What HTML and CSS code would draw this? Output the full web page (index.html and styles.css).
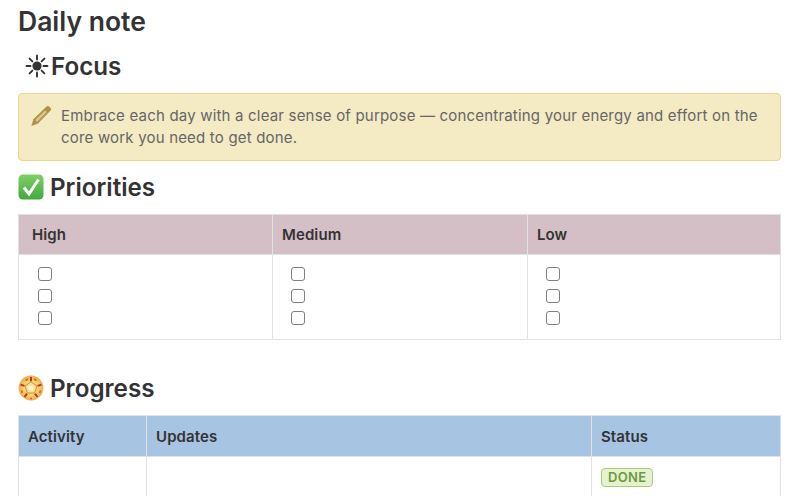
FILE: index.html
```html
<!DOCTYPE html>
<html lang="en">
<head>
    <meta charset="UTF-8">
    <title>Daily note</title>
    <link rel="stylesheet" href="styles.css">
</head>
<body>
<div class="page">
    <h1 class="title">Daily note</h1>

    <h2 class="heading heading-focus">
        <svg class="icon-sun" viewBox="0 0 24 24" width="24" height="24">
            <circle cx="12" cy="12" r="4.6" fill="#333"/>
            <g stroke="#333" stroke-width="1.9" stroke-linecap="round">
                <path d="M12 1.5v4M12 18.5v4M1.5 12h4M18.5 12h4M4.6 4.6l2.8 2.8M16.6 16.6l2.8 2.8M4.6 19.4l2.8-2.8M16.6 7.4l2.8-2.8"/>
            </g>
        </svg>Focus
    </h2>

    <div class="callout">
        <svg class="icon-pencil" viewBox="0 0 22 22" width="22" height="22">
            <path d="M16.5 1.500a2 2 0 0 1 2.500 0l1.600 1.500a2 2 0 0 1 0 2.600L8 18.400 1.400 21l2-6.800z" fill="#ae9344"/>
            <path d="M15 5.400l1.800 1.700L7.200 16.800l-2-1.600z" fill="#f5ebc4" opacity=".6"/>
        </svg>
        <p>Embrace each day with a clear sense of purpose — concentrating your energy and effort on the core work you need to get done.</p>
    </div>

    <h2 class="heading">
        <svg class="icon-emoji" viewBox="0 0 26 26" width="26" height="26">
            <defs>
                <linearGradient id="checkGreen" x1="0" y1="0" x2="0" y2="1">
                    <stop offset="0" stop-color="#7fd066"/>
                    <stop offset="1" stop-color="#42a83f"/>
                </linearGradient>
            </defs>
            <rect x="0.5" y="0.5" width="25" height="25" rx="4.5" fill="url(#checkGreen)"/>
            <path d="M6 13.500l5 6.500L20.500 5.500" fill="none" stroke="#fff" stroke-width="3"/>
        </svg>Priorities
    </h2>

    <table class="grid grid-priorities">
        <colgroup><col class="col-high"><col class="col-medium"><col></colgroup>
        <thead>
            <tr><th>High</th><th>Medium</th><th>Low</th></tr>
        </thead>
        <tbody>
            <tr>
                <td>
                    <span class="check"></span>
                    <span class="check"></span>
                    <span class="check"></span>
                </td>
                <td>
                    <span class="check"></span>
                    <span class="check"></span>
                    <span class="check"></span>
                </td>
                <td>
                    <span class="check"></span>
                    <span class="check"></span>
                    <span class="check"></span>
                </td>
            </tr>
        </tbody>
    </table>

    <h2 class="heading heading-progress">
        <svg class="icon-emoji" viewBox="0 0 26 26" width="26" height="26">
            <defs>
                <radialGradient id="wheelGold">
                    <stop offset="0" stop-color="#fff2b0"/>
                    <stop offset=".6" stop-color="#f8d273"/>
                    <stop offset="1" stop-color="#eeaa4a"/>
                </radialGradient>
            </defs>
            <circle cx="13" cy="13" r="12.400" fill="url(#wheelGold)"/>
            <path d="M13 6.800l5.900 4.300-2.300 6.900H9.400l-2.300-6.900z" fill="#fbe08e" stroke="#d98a3a" stroke-width="1"/>
            <path d="M13 2v4.200M23.500 9.600l-4 1.300M19.500 22l-2.500-3.400M6.500 22l2.500-3.400M2.500 9.600l4 1.300" stroke="#b93a1c" stroke-width="2"/>
            <path d="M10 4l-2.500 1.500M16 4l2.500 1.500M22.500 15.500l-.8 2.600M3.500 15.500l.8 2.600M12 23.500h2" stroke="#d0662a" stroke-width="1.600"/>
            <circle cx="13" cy="13" r="2.600" fill="#fff7d2"/>
        </svg>Progress
    </h2>

    <table class="grid grid-progress">
        <colgroup><col class="col-activity"><col class="col-updates"><col></colgroup>
        <thead>
            <tr><th>Activity</th><th>Updates</th><th>Status</th></tr>
        </thead>
        <tbody>
            <tr>
                <td></td>
                <td></td>
                <td><span class="badge">DONE</span></td>
            </tr>
        </tbody>
    </table>
</div>
</body>
</html>
```

FILE: styles.css
```css
html, body {
    height: 100%;
}

body {
    margin: 0;
    overflow: hidden;
    background: #fff;
    color: #333;
    font-family: Inter, "Liberation Sans", sans-serif;
}

.page {
    padding: 5px 19px 0 18px;
}

.title {
    margin: 0;
    font-size: 26.5px;
    line-height: 32px;
    font-weight: 600;
}

.heading {
    display: flex;
    align-items: center;
    gap: 6px;
    margin: 0;
    height: 34px;
    font-size: 24.2px;
    font-weight: 600;
}

.heading-focus {
    margin: 12px 0 10px 7px;
    gap: 2px;
}

.heading-progress {
    margin-top: 31px;
}

.icon-emoji {
    flex: none;
}

.callout {
    display: flex;
    align-items: flex-start;
    gap: 9px;
    box-sizing: border-box;
    height: 68px;
    margin-bottom: 9px;
    padding: 11px;
    background: #f4eac3;
    border: 1px solid #ead68a;
    border-radius: 4px;
    color: #666;
    font-size: 15px;
    line-height: 22px;
    letter-spacing: .19px;
}

.callout p {
    margin: 0;
}

.icon-pencil {
    flex: none;
}

.grid {
    width: 763px;
    margin-top: 10px;
    border-collapse: collapse;
    table-layout: fixed;
    font-size: 15px;
}

.grid th,
.grid td {
    box-sizing: border-box;
    border: 1px solid #e2e2e2;
    text-align: left;
    vertical-align: top;
}

.grid th {
    height: 40px;
    padding: 0 9px;
    font-weight: 600;
    letter-spacing: .1px;
    vertical-align: middle;
}

.grid-priorities th {
    background: #d5bfc7;
}

.grid-priorities th:first-child {
    padding-left: 13px;
}

.grid-priorities td {
    height: 85px;
    padding: 12px 18px 0;
}

.grid-priorities td:first-child {
    padding-left: 19px;
}

.col-high {
    width: 254px;
}

.col-medium {
    width: 255px;
}

.check {
    display: block;
    box-sizing: border-box;
    width: 14px;
    height: 14px;
    margin-bottom: 8px;
    background: #fff;
    border: 1px solid #808080;
    border-radius: 3px;
}

.grid-progress th {
    height: 41px;
    background: #a7c4e2;
}

.grid-progress td {
    height: 60px;
    padding: 11px 9px;
}

.col-activity {
    width: 128px;
}

.col-updates {
    width: 445px;
}

.badge {
    display: block;
    width: max-content;
    padding: 0 6px;
    background: #e6f2ce;
    border: 1px solid #a9cd7e;
    border-radius: 4px;
    color: #6a9a3e;
    font-size: 13px;
    line-height: 17px;
    font-weight: 600;
    letter-spacing: .3px;
}
```
